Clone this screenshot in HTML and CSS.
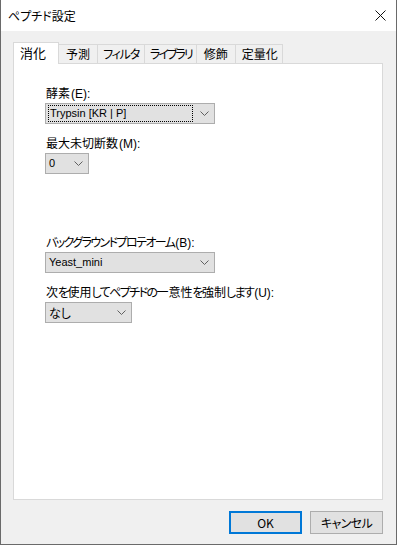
FILE: index.html
```html
<!DOCTYPE html>
<html lang="ja">
<head>
<meta charset="utf-8">
<title>ペプチド設定</title>
<link rel="stylesheet" href="styles.css">
</head>
<body>
<div class="window">
  <div class="titlebar">
    <span class="title">ペプチド設定</span>
    <span class="close" aria-label="閉じる">
      <svg width="11" height="11" viewBox="0 0 11 11"><path d="M0.5 0.5 L10.5 10.5 M10.5 0.5 L0.5 10.5" stroke="#111" stroke-width="1" fill="none"/></svg>
    </span>
  </div>
  <div class="client">
    <div class="tabs">
      <div class="tab active">消化</div>
      <div class="tab">予測</div>
      <div class="tab kana">フィルタ</div>
      <div class="tab kana tight">ライブラリ</div>
      <div class="tab">修飾</div>
      <div class="tab compact">定量化</div>
    </div>
    <div class="panel">
      <div class="field">
        <div class="label">酵素<span class="mn">(E):</span></div>
        <div class="combo wide focused">
          <span class="value">Trypsin [KR | P]</span>
          <svg class="chev" width="9" height="5" viewBox="0 0 9 5"><path d="M0.5 0.5 L4.5 4.5 L8.5 0.5" stroke="#606060" fill="none"/></svg>
        </div>
      </div>
      <div class="field">
        <div class="label">最大未切断数<span class="mn">(M):</span></div>
        <div class="combo tiny">
          <span class="value">0</span>
          <svg class="chev" width="9" height="5" viewBox="0 0 9 5"><path d="M0.5 0.5 L4.5 4.5 L8.5 0.5" stroke="#606060" fill="none"/></svg>
        </div>
      </div>
      <div class="field spaced">
        <div class="label"><span class="kn">バックグラウンドプロテオーム</span><span class="mn">(B):</span></div>
        <div class="combo wide">
          <span class="value">Yeast_mini</span>
          <svg class="chev" width="9" height="5" viewBox="0 0 9 5"><path d="M0.5 0.5 L4.5 4.5 L8.5 0.5" stroke="#606060" fill="none"/></svg>
        </div>
      </div>
      <div class="field">
        <div class="label">次<span class="kn">を</span>使用<span class="kn">してペプチドの</span>一意性<span class="kn">を</span>強制<span class="kn">します</span><span class="mn">(U):</span></div>
        <div class="combo mid">
          <span class="value">なし</span>
          <svg class="chev" width="9" height="5" viewBox="0 0 9 5"><path d="M0.5 0.5 L4.5 4.5 L8.5 0.5" stroke="#606060" fill="none"/></svg>
        </div>
      </div>
    </div>
    <div class="buttons">
      <button class="btn default">OK</button>
      <button class="btn"><span class="kn">キャンセル</span></button>
    </div>
  </div>
</div>
</body>
</html>
```

FILE: styles.css
```css
html, body {
  margin: 0;
  padding: 0;
  background: #ffffff;
}
body {
  font-family: "Noto Sans CJK JP", "Noto Sans", sans-serif;
  font-size: 12px;
  font-feature-settings: "palt";
  color: #000;
}
.window {
  width: 397px;
  height: 545px;
  box-sizing: border-box;
  border: 1px solid #6a6a6a;
  border-top: none;
  display: flex;
  flex-direction: column;
  background: #f0f0f0;
}
.titlebar {
  height: 31px;
  flex: none;
  background: #ffffff;
  display: flex;
  align-items: center;
  justify-content: space-between;
  padding: 0 10px 0 7px;
}
.title {
  font-size: 12px;
  line-height: 16px;
}
.close {
  display: flex;
  width: 11px;
  height: 11px;
}
.client {
  flex: 1;
  display: flex;
  flex-direction: column;
  padding: 11px 13px 11px 12px;
}
.tabs {
  display: flex;
  align-items: flex-end;
  height: 21px;
  flex: none;
}
.tab {
  box-sizing: border-box;
  height: 19px;
  line-height: 17px;
  padding: 0 7px;
  border: 1px solid #d9d9d9;
  border-bottom: none;
  background: #f0f0f0;
  margin-left: -1px;
  white-space: nowrap;
}
.tab.kana {
  padding: 0 5px;
  letter-spacing: -1.2px;
}
.tab.kana.tight {
  padding: 0 4px 0 5px;
  letter-spacing: -2px;
}
.tab.compact {
  padding: 0 4px 0 6px;
}
.tab.active {
  height: 22px;
  line-height: 20px;
  margin-left: 0;
  margin-bottom: -1px;
  padding: 0 12px 0 6px;
  background: #ffffff;
  position: relative;
  z-index: 1;
  font-size: 13px;
}
.panel {
  flex: none;
  height: 437px;
  box-sizing: border-box;
  border: 1px solid #d9d9d9;
  background: #ffffff;
  padding: 21px 0 0 31px;
}
.field {
  margin-bottom: 11px;
}
.field.spaced {
  margin-top: 60px;
}
.label {
  height: 16px;
  line-height: 16px;
  margin-bottom: 2px;
  padding-left: 1px;
  white-space: nowrap;
}
.kn {
  letter-spacing: -1.6px;
}
.mn {
  font-family: "Liberation Sans", sans-serif;
  font-size: 12px;
  margin-left: 1px;
}
.combo {
  box-sizing: border-box;
  height: 21px;
  border: 1px solid #adadad;
  background: #e1e1e1;
  display: flex;
  align-items: center;
  justify-content: space-between;
  padding: 0 5px 0 2px;
  position: relative;
}
.combo.wide { width: 170px; }
.combo.tiny { width: 44px; }
.combo.mid { width: 87px; }
.value {
  font-family: "Liberation Sans", "Noto Sans CJK JP", sans-serif;
  font-size: 11px;
  line-height: 15px;
  padding-left: 1px;
}
.combo.mid .value {
  font-family: "Noto Sans CJK JP", sans-serif;
  font-size: 12px;
}
.combo.focused .value {
  flex: none;
  width: 143px;
  height: 15px;
  box-sizing: border-box;
  outline: 1px dotted #000;
  outline-offset: 0;
  margin-left: 1px;
}
.chev {
  flex: none;
}
.buttons {
  display: flex;
  justify-content: flex-end;
  gap: 8px;
  margin-top: 11px;
}
.btn {
  box-sizing: border-box;
  width: 73px;
  height: 23px;
  border: 1px solid #adadad;
  background: #e1e1e1;
  font-family: "Noto Sans CJK JP", sans-serif;
  font-feature-settings: "palt";
  font-size: 12px;
  color: #000;
  padding: 0;
  margin: 0;
}
.btn .kn {
  letter-spacing: -0.6px;
}
.btn.default {
  border: 2px solid #0078d7;
}
```
